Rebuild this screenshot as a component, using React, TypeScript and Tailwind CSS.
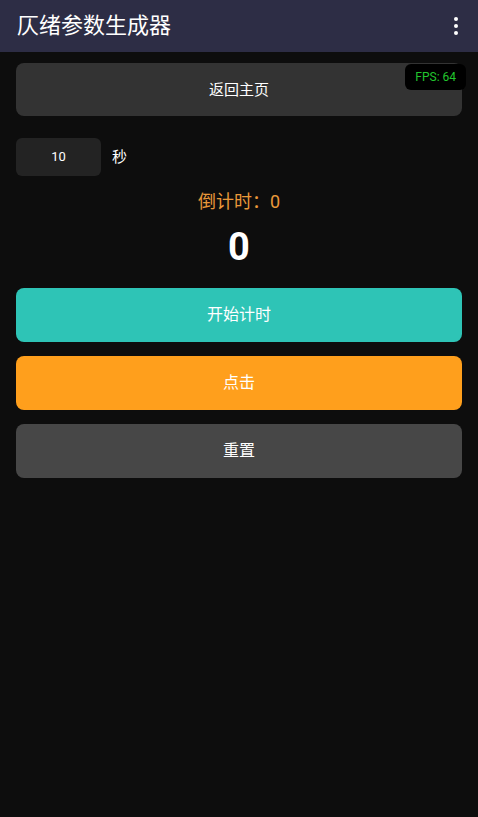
export default function App() {
  return (
    <div
      className="min-h-[817px] w-full bg-[#0d0d0d] text-white"
      style={{ fontFamily: 'Roboto, "Noto Sans CJK SC", sans-serif' }}
    >
      <header className="flex h-[52px] items-center justify-between bg-[#2d2d45] pl-[17px] pr-[20px]">
        <h1 className="text-[22px] leading-none text-white">仄绪参数生成器</h1>
        <div className="flex flex-col items-center gap-[3px]">
          <span className="block h-[4px] w-[4px] rounded-full bg-white" />
          <span className="block h-[4px] w-[4px] rounded-full bg-white" />
          <span className="block h-[4px] w-[4px] rounded-full bg-white" />
        </div>
      </header>

      <main className="px-4 pt-[11px]">
        <div className="relative">
          <button className="flex h-[53px] w-full items-center justify-center rounded-lg bg-[#333333] pt-[2px] text-[15px] text-white">
            返回主页
          </button>
          <div className="absolute right-[-4px] top-[1px] rounded-md bg-black px-[10px] py-[4px] text-[12px] leading-[18px] text-[#22c52e]">
            FPS: 64
          </div>
        </div>

        <div className="mt-[22px] flex items-center gap-[11px]">
          <div className="flex h-[38px] w-[85px] items-center justify-center rounded-md bg-[#232323] text-[13px] text-white">
            10
          </div>
          <span className="text-[15px] text-white">秒</span>
        </div>

        <div className="mt-[14px] text-center text-[18px] leading-[24px] text-[#e9983a]">
          倒计时：0
        </div>
        <div className="mt-[10px] text-center text-[38px] font-bold leading-[46px] text-white">
          0
        </div>

        <div className="mt-[18px] flex flex-col gap-[14px]">
          <button className="flex h-[54px] w-full items-center justify-center rounded-lg bg-[#2ec4b6] text-[16px] text-white">
            开始计时
          </button>
          <button className="flex h-[54px] w-full items-center justify-center rounded-lg bg-[#ff9f1c] text-[16px] text-white">
            点击
          </button>
          <button className="flex h-[54px] w-full items-center justify-center rounded-lg bg-[#474747] text-[16px] text-white">
            重置
          </button>
        </div>
      </main>
    </div>
  );
}
